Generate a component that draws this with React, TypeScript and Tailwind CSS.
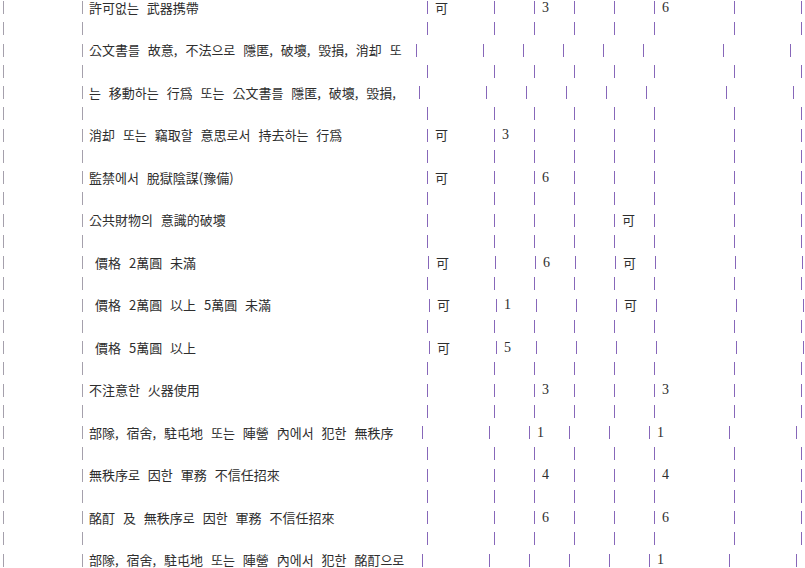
import clsx from "clsx";

type Row = {
  desc: string;
  marks: (string | null)[];
  descWidth?: string;
  indent?: boolean;
};

const rows: Row[] = [
  { desc: "許可없는 武器携帶", marks: ["可", null, "3", null, null, "6", null] },
  {
    desc: "公文書를 故意, 不法으로 隱匿, 破壞, 毁損, 消却 또",
    marks: [null, null, null, null, null, null, null],
    descWidth: "w-[334px]",
  },
  {
    desc: "는 移動하는 行爲 또는 公文書를 隱匿, 破壞, 毁損,",
    marks: [null, null, null, null, null, null, null],
    descWidth: "w-[337px]",
  },
  { desc: "消却 또는 竊取할 意思로서 持去하는 行爲", marks: ["可", "3", null, null, null, null, null] },
  { desc: "監禁에서 脫獄陰謀(豫備)", marks: ["可", null, "6", null, null, null, null] },
  { desc: "公共財物의 意識的破壞", marks: [null, null, null, null, "可", null, null] },
  {
    desc: "價格 2萬圓 未滿",
    marks: ["可", null, "6", null, "可", null, null],
    descWidth: "w-[346px]",
    indent: true,
  },
  {
    desc: "價格 2萬圓 以上 5萬圓 未滿",
    marks: ["可", "1", null, null, "可", null, null],
    descWidth: "w-[347px]",
    indent: true,
  },
  {
    desc: "價格 5萬圓 以上",
    marks: ["可", "5", null, null, null, null, null],
    descWidth: "w-[347px]",
    indent: true,
  },
  { desc: "不注意한 火器使用", marks: [null, null, "3", null, null, "3", null] },
  {
    desc: "部隊, 宿舍, 駐屯地 또는 陣營 內에서 犯한 無秩序",
    marks: [null, null, "1", null, null, "1", null],
    descWidth: "w-[340px]",
  },
  { desc: "無秩序로 因한 軍務 不信任招來", marks: [null, null, "4", null, null, "4", null] },
  { desc: "酩酊 及 無秩序로 因한 軍務 不信任招來", marks: [null, null, "6", null, null, "6", null] },
  {
    desc: "部隊, 宿舍, 駐屯地 또는 陣營 內에서 犯한 酩酊으로",
    marks: [null, null, null, null, null, "1", null],
    descWidth: "w-[340px]",
  },
];

// widths of the seven columns right of the description
const colWidths = ["w-[67px]", "w-[40px]", "w-[40px]", "w-[40px]", "w-[40px]", "w-[80px]", "w-[67px]"];

function Bar({ gray }: { gray?: boolean }) {
  return (
    <span
      className={clsx(
        "inline-block w-px h-[13px] shrink-0",
        gray ? "bg-[#a5a0ac]" : "bg-[#8767b9]"
      )}
    />
  );
}

function Cell({
  width,
  gray,
  children,
  serif,
  pad = "pl-[7px]",
}: {
  width: string;
  gray?: boolean;
  children?: React.ReactNode;
  serif?: boolean;
  pad?: string;
}) {
  return (
    <div className={clsx("flex items-center shrink-0", width)}>
      <Bar gray={gray} />
      {children && (
        <span
          className={clsx(
            "whitespace-nowrap leading-[14px]",
            pad,
            serif && "font-['Liberation_Serif',serif] text-[14px]"
          )}
        >
          {children}
        </span>
      )}
    </div>
  );
}

function Line({ row }: { row?: Row }) {
  return (
    <div className="flex items-center h-[21.25px] pl-[3px]">
      <Cell width="w-[79px]" gray />
      <Cell
        width={row?.descWidth ?? "w-[345px]"}
        gray
        pad={row?.indent ? "pl-[12px]" : "pl-[6px]"}
      >
        {row?.desc}
      </Cell>
      {colWidths.map((w, i) => {
        const m = row?.marks[i];
        return (
          <Cell key={i} width={w} serif={!!m && m !== "可"}>
            {m}
          </Cell>
        );
      })}
      <Bar />
    </div>
  );
}

export default function App() {
  return (
    <div className="w-[805px] h-[568px] overflow-hidden bg-white text-[#2e2e2e] text-[13px] font-['Noto_Sans_CJK_KR','Noto_Sans_CJK_JP',sans-serif] [word-spacing:5px]">
      <div className="-mt-[3px]">
        {rows.map((r, i) => (
          <div key={i}>
            <Line row={r} />
            <Line />
          </div>
        ))}
      </div>
    </div>
  );
}
